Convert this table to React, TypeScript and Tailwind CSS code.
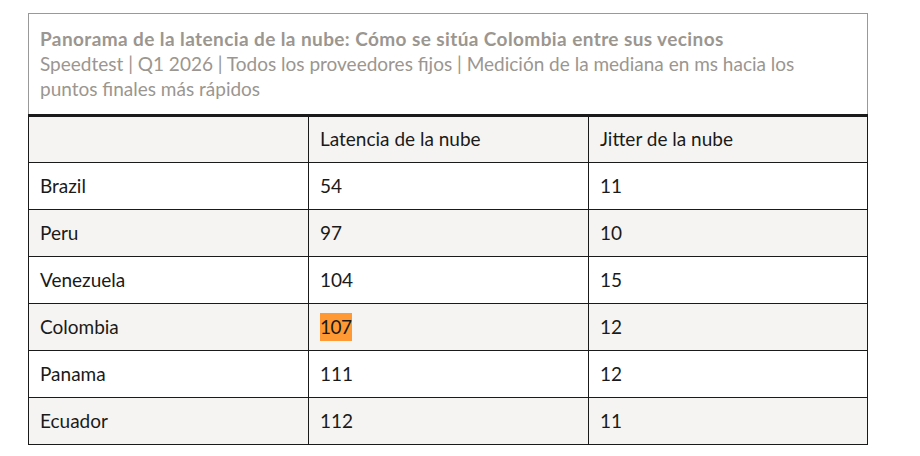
const rows = [
  { country: 'Brazil', latency: '54', jitter: '11' },
  { country: 'Peru', latency: '97', jitter: '10' },
  { country: 'Venezuela', latency: '104', jitter: '15' },
  { country: 'Colombia', latency: '107', jitter: '12', highlight: true },
  { country: 'Panama', latency: '111', jitter: '12' },
  { country: 'Ecuador', latency: '112', jitter: '11' },
]

export default function App() {
  return (
    <main className="min-h-screen bg-white pt-[13px] pl-[28px] font-['Lato',sans-serif] text-[#1a1a1a]">
      <div className="w-[840px]">
        <div className="border border-b-0 border-[#999] px-[11px] pt-[12px] pb-[13px] text-[19px] leading-[25px] text-[#9b9690]">
          <div className="font-bold tracking-[0.4px]">
            Panorama de la latencia de la nube: Cómo se sitúa Colombia entre sus vecinos
          </div>
          <div>
            Speedtest | Q1 2026 | Todos los proveedores fijos | Medición de la mediana en ms hacia los puntos finales más rápidos
          </div>
        </div>
        <table className="w-full border-collapse text-[19px] border-t-[3px] border-t-[#1a1a1a]">
          <thead>
            <tr className="bg-[#f5f4f2] h-[47px]">
              <th className="w-[280px] border-[1.5px] border-[#1a1a1a] border-t-0 px-[11px] text-left font-normal"></th>
              <th className="w-[280px] border-[1.5px] border-[#1a1a1a] border-t-0 px-[11px] text-left font-normal">Latencia de la nube</th>
              <th className="border-[1.5px] border-[#1a1a1a] border-t-0 px-[11px] text-left font-normal">Jitter de la nube</th>
            </tr>
          </thead>
          <tbody>
            {rows.map((r, i) => (
              <tr key={r.country} className={`h-[47px] ${i % 2 === 1 ? 'bg-[#f5f4f2]' : 'bg-white'}`}>
                <td className="border-[1.5px] border-[#1a1a1a] px-[11px]">{r.country}</td>
                <td className="border-[1.5px] border-[#1a1a1a] px-[11px]">
                  {r.highlight ? (
                    <span className="bg-[#ff9933] inline-block leading-[28px] tracking-[-0.5px]">{r.latency}</span>
                  ) : (
                    r.latency
                  )}
                </td>
                <td className="border-[1.5px] border-[#1a1a1a] px-[11px]">{r.jitter}</td>
              </tr>
            ))}
          </tbody>
        </table>
      </div>
    </main>
  )
}
